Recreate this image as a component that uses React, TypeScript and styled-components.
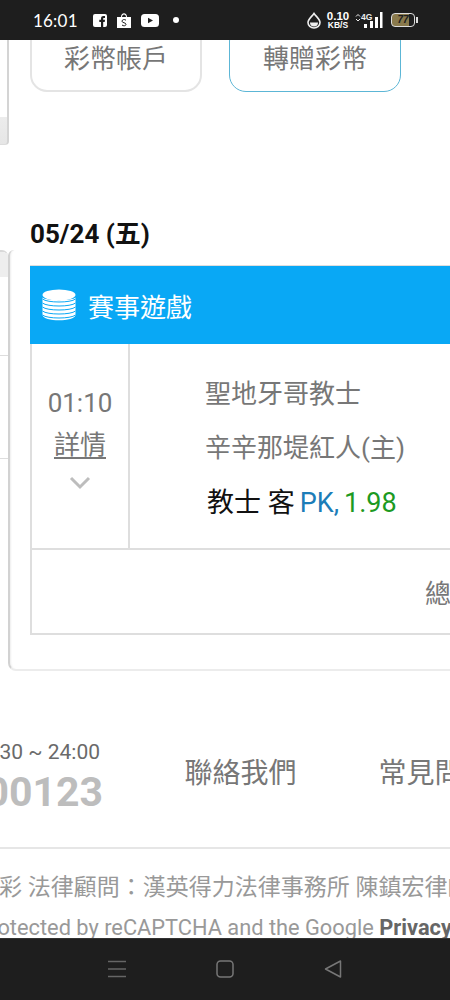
import React from 'react';
import styled, { createGlobalStyle } from 'styled-components';

const GlobalStyle = createGlobalStyle`
  html, body {
    margin: 0;
    padding: 0;
    background: #1e1e1e;
  }
  * {
    box-sizing: border-box;
  }
`;

const FONT = `Roboto, "Noto Sans CJK TC", sans-serif`;

const Page = styled.div`
  width: 450px;
  height: 1000px;
  display: flex;
  flex-direction: column;
  overflow: hidden;
  font-family: ${FONT};
`;

/* status bar */
const StatusBar = styled.div`
  flex: none;
  height: 40px;
  background: #1e1e1e;
  color: #fff;
  display: flex;
  align-items: center;
  padding: 0 32px 0 33px;
`;

const Clock = styled.span`
  font-family: Lato, sans-serif;
  font-size: 17px;
  letter-spacing: 0.2px;
  width: 60px;
`;

const StatusLeft = styled.div`
  display: flex;
  align-items: center;
  gap: 10px;
`;

const Dot = styled.span`
  width: 6px;
  height: 6px;
  border-radius: 50%;
  background: #fff;
  margin-left: 4px;
`;

const StatusRight = styled.div`
  margin-left: auto;
  display: flex;
  align-items: center;
  gap: 6px;
`;

const Speed = styled.div`
  display: flex;
  flex-direction: column;
  align-items: center;
  font-family: "Liberation Sans", sans-serif;
  font-weight: 700;
  font-size: 8.5px;
  line-height: 8px;
  width: 22px;

  b {
    font-size: 11.5px;
    line-height: 10px;
  }
`;

const Battery = styled.div`
  width: 24px;
  height: 14px;
  border: 1.5px solid #ddd;
  border-radius: 4px;
  background: linear-gradient(90deg, #8a7a4c 0, #8a7a4c 76%, #1e1e1e 76%);
  color: #1e1e1e;
  font-family: "Liberation Sans", sans-serif;
  font-size: 10px;
  font-style: italic;
  font-weight: 700;
  line-height: 11px;
  text-align: center;
`;

const BatteryTip = styled.span`
  width: 2px;
  height: 6px;
  background: #ddd;
  margin-left: -5px;
`;

/* scrolled page */
const Content = styled.div`
  flex: 1;
  min-height: 0;
  overflow: hidden;
  background: #fff;
`;

const TopRow = styled.div`
  height: 105px;
  display: flex;
`;

const TopRail = styled.div`
  flex: none;
  width: 9px;
  height: 105px;
  border-right: 2px solid #d4d4d4;
  border-bottom: 1px solid #ddd;
  border-bottom-right-radius: 4px;
  background: linear-gradient(#fff 0, #fff 74%, #ececec 74%, #e6e6e6 100%);
`;

const Buttons = styled.div`
  display: flex;
  gap: 27px;
  margin: -16px 0 0 21px;
`;

const AccountButton = styled.div<{ $active?: boolean }>`
  width: 172px;
  height: 68px;
  display: flex;
  align-items: center;
  justify-content: center;
  padding-bottom: 3px;
  border: ${(p) => (p.$active ? '1.5px solid #5cb6d6' : '2px solid #e4e4e4')};
  border-radius: 17px;
  color: #777;
  font-size: 26px;
`;

const MainRow = styled.div`
  display: flex;
  align-items: flex-start;
  padding-top: 105px;
`;

const Rail = styled.div`
  flex: none;
  width: 8px;
  border-top: 2px solid #d8d8d8;
  border-top-right-radius: 6px;
  overflow: hidden;
`;

const RailHead = styled.div`
  height: 25px;
  background: #eeeeee;
`;

const RailRow = styled.div<{ $height: number }>`
  height: ${(p) => p.$height}px;
  border-bottom: 1px solid #ddd;
`;

const Panel = styled.div`
  flex: none;
  width: 560px;
  height: 421px;
  padding: 15px 0 0 20px;
  border-left: 2px solid #d2d2d2;
  border-bottom: 2px solid #ececec;
  border-radius: 6px 0 0 8px;
  box-shadow: inset 3px 0 2px -2px rgba(0, 0, 0, 0.07);
`;

const DateTitle = styled.h2`
  margin: -46px 0 15px;
  height: 31px;
  color: #111;
  font-size: 26px;
  font-weight: 700;
  line-height: 31px;
`;

const GameTable = styled.div`
  border: 2px solid #dedede;
  border-right: 0;
`;

const TableHeader = styled.div`
  height: 78px;
  margin: -1px 0 0 -2px;
  background: #09a8f5;
  display: flex;
  align-items: center;
  gap: 12px;
  padding-left: 12px;
  color: #fff;
  font-size: 26px;
`;

const GameRow = styled.div`
  height: 206px;
  display: flex;
  border-bottom: 2px solid #dedede;
`;

const TimeCell = styled.div`
  flex: none;
  width: 98px;
  display: flex;
  flex-direction: column;
  align-items: center;
  padding-top: 41px;
  border-right: 2px solid #dedede;
  color: #777;
`;

const Time = styled.div`
  font-size: 26px;
  line-height: 36px;
`;

const DetailLink = styled.a`
  margin-top: 6px;
  font-size: 26px;
  line-height: 36px;
  text-decoration: underline;
  text-underline-offset: 3px;
`;

const Chevron = styled.svg`
  margin-top: 13px;
`;

const MatchCell = styled.div`
  display: flex;
  flex-direction: column;
  padding: 32px 0 0 75px;
`;

const TeamName = styled.div`
  height: 54px;
  color: #777;
  font-size: 26px;
  line-height: 36px;
`;

const Bet = styled.div`
  display: flex;
  align-items: center;
  gap: 5px;
  margin: 1px 0 0 2px;
  font-size: 27px;
  line-height: 36px;
  white-space: nowrap;
`;

const BetTeam = styled.span`
  color: #111;
`;

const BetType = styled.span`
  color: #1c7db8;
`;

const BetOdds = styled.span`
  color: #1c9a22;
`;

const TableFooter = styled.div`
  height: 83px;
  display: flex;
  align-items: center;
  padding-left: 393px;
  color: #777;
  font-size: 26px;
  white-space: nowrap;
`;

/* footer */
const FooterTop = styled.div`
  height: 178px;
  display: flex;
  align-items: flex-start;
  padding-top: 66px;
  border-bottom: 2px solid #e6e6e6;
`;

const Hours = styled.div`
  flex: none;
  width: 103px;
  display: flex;
  flex-direction: column;
  align-items: flex-end;
  white-space: nowrap;
`;

const HoursText = styled.div`
  padding-right: 3px;
  color: #6a6a6a;
  font-size: 21px;
  line-height: 30px;
`;

const Phone = styled.div`
  color: #bdbdbd;
  font-size: 41px;
  font-weight: 700;
  line-height: 50px;
`;

const FooterLink = styled.a`
  flex: none;
  margin: 17px 0 0 82px;
  color: #777;
  font-size: 28px;
  line-height: 40px;
  white-space: nowrap;

  &:first-of-type {
    margin-left: 81.5px;
  }
`;

const LegalLine = styled.div`
  margin-top: 20px;
  margin-left: -1px;
  color: #999;
  font-size: 23px;
  line-height: 38px;
  white-space: nowrap;
`;

const RecaptchaLine = styled.div`
  margin-top: 2px;
  margin-left: -22px;
  color: #999;
  font-size: 21.8px;
  line-height: 38px;
  white-space: nowrap;

  b {
    color: #666;
  }
`;

/* android nav bar */
const NavBar = styled.div`
  flex: none;
  height: 62px;
  background: #1e1e1e;
  border-top: 1px solid #333;
  display: flex;
  justify-content: center;
  align-items: center;
  padding-bottom: 1px;
`;

const NavItem = styled.div`
  width: 108px;
  display: flex;
  justify-content: center;
`;

function CoinStack() {
  const rows = [8, 12, 16, 20, 24, 28];
  return (
    <svg width="34" height="33" viewBox="0 0 34 33">
      <ellipse cx="17" cy="6" rx="16.5" ry="5.5" fill="#fff" />
      <path d="M.5 8.5C3 12 31 12 33.500 8.500V26C33 33 1 33 .5 26Z" fill="#fff" />
      {rows.map((y) => (
        <path key={y} d={`M.5 ${y + 2}C5 ${y + 6} 29 ${y + 6} 33.500 ${y + 2}`} fill="none" stroke="#09a8f5" strokeWidth="1" />
      ))}
    </svg>
  );
}

function App() {
  return (
    <Page>
      <GlobalStyle />
      <StatusBar>
        <Clock>16:01</Clock>
        <StatusLeft>
          <svg width="14" height="13" viewBox="0 0 14 13">
            <rect width="14" height="13" rx="2" fill="#fff" />
            <path d="M8 13V8H6.300V5.800H8V4.500C8 2.800 9 2 10.500 2H12V4H11C10.300 4 10.200 4.300 10.200 4.800V5.800H12L11.700 8H10.200V13Z" fill="#1e1e1e" />
          </svg>
          <svg width="14" height="15" viewBox="0 0 14 15">
            <path d="M0 4H4C4 -1 10 -1 10 4H14V15H0ZM5 4H9C9 0.500 5 0.500 5 4Z" fill="#fff" fillRule="evenodd" />
            <path d="M9 7.200C7.500 6 5 6.500 5 8.200C5 10 9 9.500 9 11.300C9 13 6.300 13.200 5 12" fill="none" stroke="#1e1e1e" strokeWidth="1" />
          </svg>
          <svg width="18" height="13" viewBox="0 0 18 13">
            <rect width="18" height="13" rx="3.500" fill="#fff" />
            <path d="M7 3.800L12 6.500L7 9.200Z" fill="#1e1e1e" />
          </svg>
          <Dot />
        </StatusLeft>
        <StatusRight>
          <svg width="14" height="17" viewBox="0 0 14 17">
            <path d="M7 1.500C9 4.500 13 7 13 10.500A6 5.500 0 0 1 1 10.500C1 7 5 4.500 7 1.500Z" fill="none" stroke="#eee" strokeWidth="1.600" />
            <path d="M3 10.500H11A4 4 0 0 1 3 10.500Z" fill="#eee" />
          </svg>
          <Speed>
            <b>0.10</b>
            KB/S
          </Speed>
          <svg width="30" height="18" viewBox="0 0 30 18">
            <path d="M1 5.500L3 3.500L5 5.500M1 8L3 10L5 8" fill="none" stroke="#eee" strokeWidth="1" />
            <text x="6" y="9" fill="#eee" fontSize="8.500" fontWeight="700" fontFamily="Liberation Sans">4G</text>
            <rect x="9" y="13" width="3" height="4" fill="#fff" />
            <rect x="15" y="10" width="3" height="7" fill="#fff" />
            <rect x="20" y="6" width="3" height="11" fill="#fff" />
            <rect x="25" y="1" width="2.500" height="16" fill="#fff" />
          </svg>
          <Battery>77</Battery>
          <BatteryTip />
        </StatusRight>
      </StatusBar>

      <Content>
        <TopRow>
          <TopRail />
          <Buttons>
            <AccountButton>彩幣帳戶</AccountButton>
            <AccountButton $active>轉贈彩幣</AccountButton>
          </Buttons>
        </TopRow>

        <MainRow>
          <Rail>
            <RailHead />
            <RailRow $height={79} />
            <RailRow $height={103} />
          </Rail>
          <Panel>
            <DateTitle>05/24 (五)</DateTitle>
            <GameTable>
              <TableHeader>
                <CoinStack />
                賽事遊戲
              </TableHeader>
              <GameRow>
                <TimeCell>
                  <Time>01:10</Time>
                  <DetailLink>詳情</DetailLink>
                  <Chevron width="22" height="14" viewBox="0 0 22 14">
                    <path d="M2 2L11 11L20 2" fill="none" stroke="#bdbdbd" strokeWidth="3" />
                  </Chevron>
                </TimeCell>
                <MatchCell>
                  <TeamName>聖地牙哥教士</TeamName>
                  <TeamName>辛辛那堤紅人(主)</TeamName>
                  <Bet>
                    <BetTeam>教士 客</BetTeam>
                    <BetType>PK,</BetType>
                    <BetOdds>1.98</BetOdds>
                  </Bet>
                </MatchCell>
              </GameRow>
              <TableFooter>總</TableFooter>
            </GameTable>
          </Panel>
        </MainRow>

        <FooterTop>
          <Hours>
            <HoursText>08:30 ~ 24:00</HoursText>
            <Phone>00123</Phone>
          </Hours>
          <FooterLink>聯絡我們</FooterLink>
          <FooterLink>常見問題</FooterLink>
        </FooterTop>
        <LegalLine>彩 法律顧問：漢英得力法律事務所 陳鎮宏律師</LegalLine>
        <RecaptchaLine>
          protected by reCAPTCHA and the Google <b>Privacy</b>
        </RecaptchaLine>
      </Content>

      <NavBar>
        <NavItem>
          <svg width="20" height="18" viewBox="0 0 20 18">
            <path d="M1 1.500H19M1 9H19M1 16.500H19" stroke="#666" strokeWidth="1.500" />
          </svg>
        </NavItem>
        <NavItem>
          <svg width="18" height="18" viewBox="0 0 18 18">
            <rect x="1" y="1" width="16" height="16" rx="3.500" fill="none" stroke="#777" strokeWidth="1.500" />
          </svg>
        </NavItem>
        <NavItem>
          <svg width="18" height="18" viewBox="0 0 18 18">
            <path d="M16.500 1V17L1.500 9Z" fill="none" stroke="#777" strokeWidth="1.500" strokeLinejoin="round" />
          </svg>
        </NavItem>
      </NavBar>
    </Page>
  );
}

export default App;
